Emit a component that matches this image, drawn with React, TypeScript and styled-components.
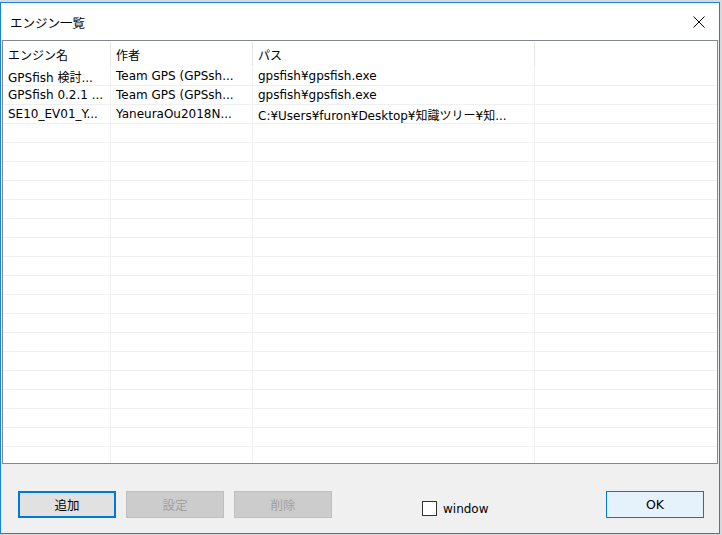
import styled, { createGlobalStyle, css } from 'styled-components';

const GlobalStyle = createGlobalStyle`
  html, body {
    margin: 0;
    padding: 0;
    background: #d6d9dd;
  }
  body {
    font-family: "DejaVu Sans", "Noto Sans CJK JP", sans-serif;
    font-size: 12px;
    color: #000000;
  }
`;

const Dialog = styled.div`
  margin-top: 2px;
  width: 718px;
  height: 530px;
  border: 1px solid #1883d7;
  background: #f0f0f0;
  display: flex;
  flex-direction: column;
`;

const TitleBar = styled.div`
  height: 37px;
  background: #ffffff;
  display: flex;
  align-items: center;
  justify-content: space-between;
  padding: 0 14px 0 9px;
`;

const Title = styled.div`
  font-size: 12.5px;
  margin-top: 1px;
`;

const CloseButton = styled.div`
  width: 12px;
  height: 12px;
  display: flex;
  align-items: center;
  justify-content: center;
`;

const ListView = styled.div`
  margin: 0 1px;
  height: 422px;
  border: 1px solid #828790;
  background: #ffffff;
  overflow: hidden;
`;

const columns = '108px 142px 282px 1fr';

const HeaderRow = styled.div`
  display: grid;
  grid-template-columns: ${columns};
  height: 26px;
`;

const HeaderCell = styled.div<{ $last?: boolean }>`
  display: flex;
  align-items: center;
  padding-left: 5px;
  margin: 1px 0 1px;
  ${(p) =>
    !p.$last &&
    css`
      border-right: 1px solid #e5e5e5;
    `}
`;

const Row = styled.div`
  display: grid;
  grid-template-columns: ${columns};
  height: 18px;
  border-bottom: 1px solid #f0f0f0;
`;

const Cell = styled.div<{ $last?: boolean }>`
  display: flex;
  align-items: center;
  padding-left: 5px;
  white-space: nowrap;
  overflow: hidden;
  ${(p) =>
    !p.$last &&
    css`
      border-right: 1px solid #f0f0f0;
    `}
`;

const Footer = styled.div`
  flex: 1;
  display: flex;
  align-items: flex-start;
  padding: 27px 15px 0 17px;
`;

const ButtonGroup = styled.div`
  display: flex;
  gap: 10px;
`;

const Button = styled.div<{ $variant?: 'focus' | 'disabled' | 'default' }>`
  width: 98px;
  height: 27px;
  box-sizing: border-box;
  display: flex;
  align-items: center;
  justify-content: center;
  font-size: 12.5px;
  ${(p) =>
    p.$variant === 'focus'
      ? css`
          background: #e1e1e1;
          border: 2px solid #0078d7;
        `
      : p.$variant === 'disabled'
      ? css`
          background: #cccccc;
          border: 1px solid #bfbfbf;
          color: #a0a0a0;
        `
      : css`
          background: #e5f1fb;
          border: 1px solid #0078d7;
        `}
`;

const CheckLabel = styled.label`
  display: flex;
  align-items: center;
  gap: 6px;
  margin: 10px 0 0 90px;
`;

const CheckBox = styled.span`
  width: 15px;
  height: 15px;
  box-sizing: border-box;
  border: 1px solid #333333;
  background: #ffffff;
`;

const OkButton = styled(Button)`
  margin-left: auto;
`;

const rows: string[][] = [
  ['GPSfish 検討...', 'Team GPS (GPSsh...', 'gpsfish¥gpsfish.exe'],
  ['GPSfish 0.2.1 ...', 'Team GPS (GPSsh...', 'gpsfish¥gpsfish.exe'],
  ['SE10_EV01_Y...', 'YaneuraOu2018N...', 'C:¥Users¥furon¥Desktop¥知識ツリー¥知...'],
];

const headers = ['エンジン名', '作者', 'パス', ''];

export default function App() {
  const blank = Array.from({ length: 20 }, () => ['', '', '']);
  const all = [...rows, ...blank];
  return (
    <>
      <GlobalStyle />
      <Dialog>
        <TitleBar>
          <Title>エンジン一覧</Title>
          <CloseButton>
            <svg width="12" height="12" viewBox="0 0 12 12">
              <path d="M0.5 0.5 L11.5 11.5 M11.5 0.5 L0.5 11.5" stroke="#000" strokeWidth="1" />
            </svg>
          </CloseButton>
        </TitleBar>
        <ListView>
          <HeaderRow>
            {headers.map((h, i) => (
              <HeaderCell key={i} $last={i === headers.length - 1}>
                {h}
              </HeaderCell>
            ))}
          </HeaderRow>
          {all.map((r, i) => (
            <Row key={i}>
              <Cell>{r[0]}</Cell>
              <Cell>{r[1]}</Cell>
              <Cell>{r[2]}</Cell>
              <Cell $last />
            </Row>
          ))}
        </ListView>
        <Footer>
          <ButtonGroup>
            <Button $variant="focus">追加</Button>
            <Button $variant="disabled">設定</Button>
            <Button $variant="disabled">削除</Button>
          </ButtonGroup>
          <CheckLabel>
            <CheckBox />
            window
          </CheckLabel>
          <OkButton>OK</OkButton>
        </Footer>
      </Dialog>
    </>
  );
}
